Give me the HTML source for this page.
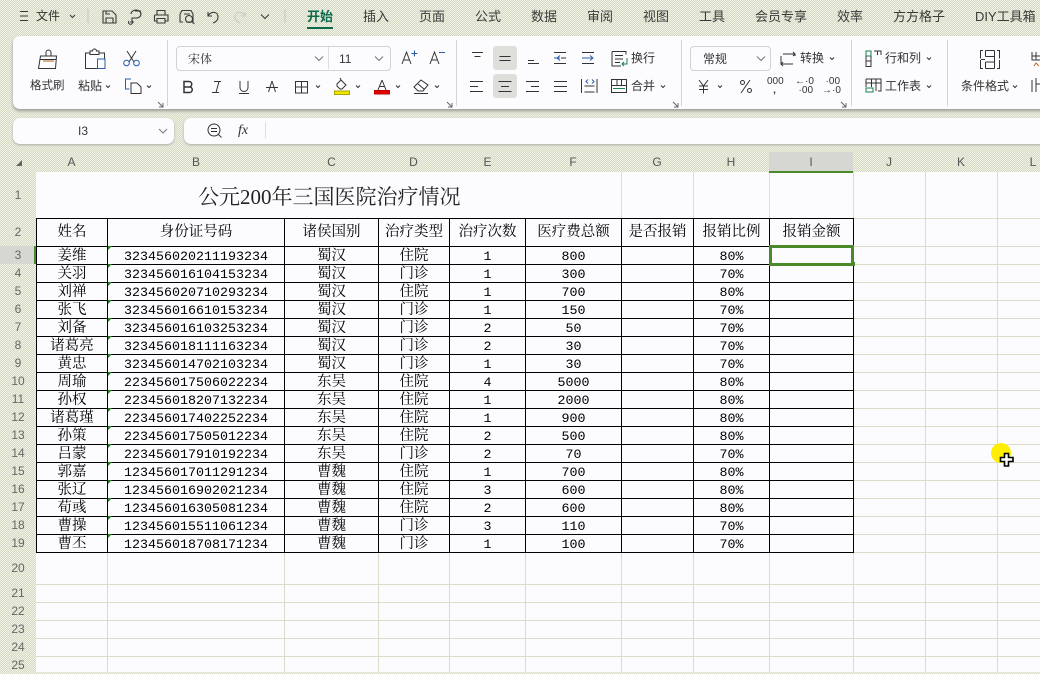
<!DOCTYPE html>
<html lang="zh"><head><meta charset="utf-8"><title>表格</title>
<style>
html,body{margin:0;padding:0}
body{width:1040px;height:672px;overflow:hidden;position:relative;background-color:#e2e5d3;background-image:conic-gradient(#d6dac4 25%,#f1f2e6 0 50%,#d6dac4 0 75%,#f1f2e6 0);background-size:2px 2px;font-family:"Liberation Sans","Noto Sans CJK SC",sans-serif;color:#333}
.a{position:absolute;white-space:nowrap}
.t{position:absolute;white-space:nowrap;font-size:13px;line-height:18px;top:8px;color:#3a3a3a}
.s{position:absolute;white-space:nowrap;font-size:12px;line-height:16px;color:#333}
.card{position:absolute;background:#fcfcff;border-radius:7px;box-shadow:0 1px 2px #aaa}
.hd{position:absolute;top:153px;height:18px;line-height:18px;font-size:12px;text-align:center;color:#555}
.rn{position:absolute;left:0;width:36px;text-align:center;font-size:12px;color:#666;line-height:18px}
#sheet{position:absolute;left:36px;top:172px;width:1004px;height:500px;background:#fcfcff}
table{position:absolute;left:36px;top:218px;border-collapse:collapse;table-layout:fixed;width:817px;font-family:"Liberation Mono","Noto Serif CJK SC",serif;color:#000}
td{border:1px solid #000;padding:4px 0 0;text-align:center;height:13px;line-height:13px;font-size:13.33px;overflow:hidden;white-space:nowrap}
tr.h td{padding-top:2px;height:25px;line-height:25px;font-size:14.5px}
.n{font-size:14.5px}
</style></head><body>
<svg class="a" style="left:0;top:0" width="1040" height="40" fill="none" stroke="#3a3a3a" stroke-width="1.1">
<path d="M20 11.500h8M20 16h8M20 20.500h8"/>
<path d="M70 15l2.500 2.500 2.500-2.500"/>
<path d="M88 9v14M285 9v14" stroke="#c8c8bc"/>
<path d="M103 11h9l4 4v8h-13zM106 23v-5h7v5M106 11v3h4"/>
<path d="M131 14a5 4 0 1 1 4 4h-3v3a2 2 0 1 1-3 0M135 11h6M130 22h4"/>
<path d="M157 15v-4.500h8v4.500M154.500 15h13.500v6h-3M157.500 21h-3v-6M157 18.500h8v4.500h-8z"/>
<path d="M180 14l2-3.500h9l2 3.500v8h-7M180 14v8h3"/><circle cx="189" cy="19" r="3.500"/><path d="M191.500 21.500l3 2.500M184 14h6"/>
<path d="M208 12v4h4M208 16c3-5 10-5 10 1 0 3-2 5-5 6"/>
<path d="M245 12v4h-4M245 16c-3-5-10-5-10 1 0 3 2 5 5 6" stroke="#c9c9c9"/>
<path d="M261 14.500l4 4 4-4"/>
</svg>
<span class="s" style="left:36px;top:8px;font-size:12px">文件</span>
<span class="t" style="left:307px;color:#0b6b4c;font-weight:bold">开始</span>
<div class="a" style="left:307px;top:27px;width:26px;height:2px;background:#0b6b4c"></div>
<span class="t" style="left:363px">插入</span><span class="t" style="left:419px">页面</span><span class="t" style="left:475px">公式</span><span class="t" style="left:531px">数据</span><span class="t" style="left:587px">审阅</span><span class="t" style="left:643px">视图</span><span class="t" style="left:699px">工具</span><span class="t" style="left:755px">会员专享</span><span class="t" style="left:837px">效率</span><span class="t" style="left:893px">方方格子</span><span class="t" style="left:975px">DIY工具箱</span>

<div class="card" style="left:13px;top:36px;width:1040px;height:73px;box-shadow:0 2px 3px #999"></div>
<div class="card" style="left:13px;top:118px;width:161px;height:26px"></div>
<div class="card" style="left:184px;top:118px;width:870px;height:26px"></div>

<div class="a" style="left:176px;top:46px;width:213px;height:23px;border:1px solid #d2d2d2;border-radius:4px;background:#fcfcff"></div>
<div class="a" style="left:328px;top:47px;width:1px;height:22px;background:#ddd"></div>
<div class="a" style="left:690px;top:46px;width:79px;height:23px;border:1px solid #d2d2d2;border-radius:4px"></div>
<div class="a" style="left:493px;top:46px;width:24px;height:24px;border-radius:3px;background:#dededa"></div>
<div class="a" style="left:493px;top:74px;width:24px;height:24px;border-radius:3px;background:#dededa"></div>

<svg class="a" style="left:0;top:36px" width="1040" height="112" viewBox="0 36 1040 112" fill="none" stroke="#333" stroke-width="1">
<path d="M167.500 40v66M456.500 40v66M681.500 40v66M851.500 40v66M947.500 40v66" stroke="#d4d4d4"/>
<!-- launchers -->
<path d="M158 102l5 5M163 103v4h-4M447 102l5 5M452 103v4h-4M673 102l5 5M678 103v4h-4M841 102l5 5M846 103v4h-4" stroke="#666"/>
<!-- format brush -->
<path d="M46 56v-3.500a2.500 2.500 0 0 1 5 0v3.500M40.500 56h16l-1 12.500h-17zM40 59.500h16.500"/><path d="M43 61h11" stroke="#b5651d"/>
<!-- paste -->
<path d="M90 53h-4.500v15.500h13M104.500 59v-6h-5M90 53v-2h2.500a2 2 0 0 1 4 0h2.500v3.500h-9z"/><path d="M97.500 59h7.500v9.500h-7.500z" stroke="#2a5caa"/>
<!-- scissors -->
<path d="M127 51l7 11M136 51l-7 11"/><circle cx="126.500" cy="63" r="2.800" stroke="#2a5caa"/><circle cx="136.500" cy="63" r="2.800" stroke="#2a5caa"/>
<!-- copy -->
<path d="M131 79h-5.500v10h4" stroke="#2a5caa"/><path d="M131 83h6l4 4v6.500h-10z"/>
<!-- chevrons -->
<path d="M106 85.500l2 2 2-2M147 85.500l2 2 2-2M316 85.500l2 2 2-2M356 85.500l2 2 2-2M396 85.500l2 2 2-2M435 85.500l2 2 2-2M661 85.500l2 2 2-2M718 85.500l2 2 2-2M830 57.500l2 2 2-2M927 57.500l2 2 2-2M927 85.500l2 2 2-2M1013 85.500l2 2 2-2"/>
<path d="M315 56.500l4 4 4-4M375 56.500l4 4 4-4M757 56.500l4 4 4-4M159 129l4 4 4-4" stroke="#777"/>
<!-- B I U S -->
<path d="M184 81.500h5a2.500 2.500 0 0 1 0 5.500h-5zM184 87h5.500a2.600 2.600 0 0 1 0 5.500h-5.500z" stroke-width="1.500"/>
<path d="M214 81.500h7M219 81.500l-3 11M212 92.500h7"/>
<path d="M240 81v6.500a4 4 0 0 0 8 0v-6.500M239 93.500h10"/>
<path d="M272 81l-3.500 11M272 81l3.500 11M266 87.500h12"/>
<path d="M295.500 81.500h12v11.500h-12zM301.500 81.500v11.500M295.500 87h12"/>
<!-- fill -->
<path d="M337 84l4-4 5 5-4 4h-2l-3-3zM341 80l-1-2"/><rect x="334.500" y="91" width="15" height="3.500" fill="#f2e600" stroke="#a9a400"/>
<!-- font color -->
<path d="M382 80l-4 10M382 80l4 10M379.500 86.500h5.500"/><rect x="374.500" y="90.500" width="15" height="3.500" fill="#e00000" stroke="#c00000"/>
<!-- eraser -->
<path d="M414 87l7-7 7 5-5 6h-5zM418 84l6 5M414 93.500h14"/>
<!-- A+ A- -->
<path d="M402 64l4.500-12 4.500 12M404 60h5"/><path d="M411.500 53.500h6M414.500 50.500v6" stroke="#2a5caa"/>
<path d="M430 64l4.500-12 4.500 12M432 60h5"/><path d="M439 52.500h6" stroke="#2a5caa"/>
<!-- align top row -->
<path d="M472 52.500h11M474.500 56.500h6"/>
<path d="M499.500 56.500h11M499.500 60.500h11"/>
<path d="M528 60.500h6M528 63.500h11"/>
<path d="M554 52.500h12M561 58h5M554 63.500h12"/><path d="M560 55.500l-3 2.500 3 2.500M554 58h6" stroke="#2a5caa"/>
<path d="M582 52.500h12M589 63.500h5M582 63.500h7"/><path d="M590 55.500l3 2.500-3 2.500M582 58h10" stroke="#2a5caa"/>
<path d="M612 51.500h14v3M612 51.500v14.500h9M615 55.500h8M615 59h8M615 62.500h5"/><path d="M627 58v6h-5M624 62l-2 2 2 2" stroke="#1a7f4e"/>
<!-- align row2 -->
<path d="M470 81.500h13M470 86.500h8M470 91.500h13"/>
<path d="M498.500 81.500h13M501 86.500h8M498.500 91.500h13"/>
<path d="M526 81.500h13M531 86.500h8M526 91.500h13"/>
<path d="M554 81.500h13M554 86.500h13M554 91.500h13"/>
<path d="M581.500 79v14M597 79v14M584.500 86h10M584.500 92h10"/><path d="M588 79.500l-2 2 2 2M592 79.500l2 2-2 2" stroke="#2a5caa"/>
<path d="M611.500 79.500h15v13h-15zM617 79.500v6M621.500 79.500v6M611.500 85.500h15"/><path d="M613 88.500h12" stroke="#1a7f4e"/>
<!-- convert -->
<path d="M783 54h12v2M793 52l2 2-2 2M793 64h-12v-8M783 62l-2 2 2 2"/>
<!-- yen percent -->
<path d="M699 80l4.500 6 4.500-6M703.500 86v7.500M699 86h9M699 89.500h9"/>
<path d="M741 93l9-13"/><circle cx="742.500" cy="82.500" r="2"/><circle cx="749.500" cy="90.500" r="2"/>
<!-- row & col -->
<path d="M866 51h5v5h-5z" stroke="#1a7f4e"/><path d="M866 56v10.500h5v-10.500M866 61h5M874 51h7v4M877.500 51v4"/>
<path d="M866 79h15v12h-3M866 79v8M871.500 79v8M876 79v12M866 83h15"/><path d="M866 88h7v4h-7z" stroke="#1a7f4e"/>
<!-- cond format -->
<path d="M983 50.500h-2.500v8M980.500 60v8.500h2.500M997 50.500h2.500v8M999.500 60v8.500h-2.500M985.500 50.500h9M985.500 68.500h9M985.500 50.500v6M985.500 62v6.500M994.500 50.500v6M994.500 62v6.500M985.500 56.500h9v5.500h-9M981 59.500h4"/>
<path d="M1032 52v8h8M1036 52v8M1032 56h8"/><path d="M1034 66l2-3 3 3" stroke="#c2651d"/><path d="M1032 80v12M1036 78v14M1036 84h6"/>
<!-- magnifier -->
<circle cx="214" cy="130" r="6"/><path d="M218.500 134.500l3 3M211 128.500h6M211 131.500h6"/>
<path d="M265.500 122v16" stroke="#ddd"/>
</svg>

<span class="s" style="left:30px;top:78px;font-size:11.500px">格式刷</span>
<span class="s" style="left:78px;top:78px">粘贴</span>
<span class="s" style="left:188px;top:51px;font-family:'Liberation Serif','Noto Serif CJK SC',serif">宋体</span>
<span class="s" style="left:339px;top:51px">11</span>
<span class="s" style="left:631px;top:50px">换行</span>
<span class="s" style="left:631px;top:78px">合并</span>
<span class="s" style="left:703px;top:51px">常规</span>
<span class="s" style="left:800px;top:50px">转换</span>
<span class="s" style="left:885px;top:50px">行和列</span>
<span class="s" style="left:885px;top:78px">工作表</span>
<span class="s" style="left:961px;top:78px">条件格式</span>
<span class="s" style="left:767px;top:77px;font-size:10px;line-height:9px;text-align:center;width:15px">000<br><b>,</b></span>
<span class="s" style="left:795px;top:77px;font-size:10px;line-height:9px;width:18px;text-align:right">←·0<br>·00</span>
<span class="s" style="left:822px;top:77px;font-size:10px;line-height:9px;width:18px;text-align:right">·00<br>→·0</span>
<span class="s" style="left:78px;top:123px;font-size:12px">I3</span>
<span class="s" style="left:238px;top:122px;font:italic 14px/18px 'Liberation Serif',serif">fx</span>

<div class="hd" style="left:36px;width:71px">A</div><div class="hd" style="left:108px;width:176px">B</div><div class="hd" style="left:285px;width:93px">C</div><div class="hd" style="left:378px;width:71px">D</div><div class="hd" style="left:450px;width:75px">E</div><div class="hd" style="left:525px;width:96px">F</div><div class="hd" style="left:621px;width:72px">G</div><div class="hd" style="left:693px;width:76px">H</div>
<div class="a" style="left:769px;top:152px;width:84px;height:19px;background:#d6d6d2"></div>
<div class="hd" style="left:769px;width:84px">I</div><div class="hd" style="left:853px;width:72px">J</div><div class="hd" style="left:925px;width:72px">K</div><div class="hd" style="left:997px;width:72px">L</div>
<svg class="a" style="left:15px;top:158px" width="9" height="9"><path d="M1 8L7 2V8Z" fill="#666"/></svg>

<div id="sheet"></div>
<svg class="a" style="left:0;top:172px" width="1040" height="500" viewBox="0 172 1040 500" stroke="#dcdcc8" stroke-width="1" fill="none">
<path d="M107.500 172V672M284.500 172V672M378.500 172V672M449.500 172V672M525.500 172V672M621.500 172V672M693.500 172V672M769.500 172V672M853.500 172V672M925.500 172V672M997.500 172V672"/>
<path d="M36 218.500H1040M36 246.500H1040M36 264.500H1040M36 282.500H1040M36 300.500H1040M36 318.500H1040M36 336.500H1040M36 354.500H1040M36 372.500H1040M36 390.500H1040M36 408.500H1040M36 426.500H1040M36 444.500H1040M36 462.500H1040M36 480.500H1040M36 498.500H1040M36 516.500H1040M36 534.500H1040M36 552.500H1040M36 584.500H1040M36 602.500H1040M36 620.500H1040M36 638.500H1040M36 656.500H1040"/>
</svg>
<div class="a" style="left:36px;top:172px;width:585px;height:46px;background:#fcfcff"></div>
<div class="a" style="left:621px;top:172px;width:1px;height:46px;background:#dcdcee"></div>
<div class="a" style="left:693px;top:172px;width:1px;height:46px;background:#dcdcee"></div>
<div class="a" style="left:769px;top:172px;width:1px;height:46px;background:#dcdcee"></div>
<div class="a" style="left:769px;top:171px;width:84px;height:2px;background:#4a8a2a"></div>
<div class="a" style="left:198px;top:183px;font:21px/28px 'Liberation Serif','Noto Serif CJK SC',serif;color:#222">公元200年三国医院治疗情况</div>

<div class="a" style="left:0;top:246px;width:34px;height:18px;background:#d6d6d2"></div>
<div class="a" style="left:34px;top:246px;width:2px;height:18px;background:#4a8a2a"></div>
<div class="rn" style="top:186px">1</div><div class="rn" style="top:223px">2</div><div class="rn" style="top:246px">3</div><div class="rn" style="top:264px">4</div><div class="rn" style="top:282px">5</div><div class="rn" style="top:300px">6</div><div class="rn" style="top:318px">7</div><div class="rn" style="top:336px">8</div><div class="rn" style="top:354px">9</div><div class="rn" style="top:372px">10</div><div class="rn" style="top:390px">11</div><div class="rn" style="top:408px">12</div><div class="rn" style="top:426px">13</div><div class="rn" style="top:444px">14</div><div class="rn" style="top:462px">15</div><div class="rn" style="top:480px">16</div><div class="rn" style="top:498px">17</div><div class="rn" style="top:516px">18</div><div class="rn" style="top:534px">19</div><div class="rn" style="top:559px">20</div><div class="rn" style="top:584px">21</div><div class="rn" style="top:602px">22</div><div class="rn" style="top:620px">23</div><div class="rn" style="top:638px">24</div><div class="rn" style="top:656px">25</div>

<table>
<colgroup><col style="width:71px"><col style="width:177px"><col style="width:94px"><col style="width:71px"><col style="width:76px"><col style="width:96px"><col style="width:72px"><col style="width:76px"><col style="width:84px"></colgroup>
<tr class="h"><td>姓名</td><td>身份证号码</td><td>诸侯国别</td><td>治疗类型</td><td>治疗次数</td><td>医疗费总额</td><td>是否报销</td><td>报销比例</td><td>报销金额</td></tr>
<tr><td class="n">姜维</td><td>323456020211193234</td><td class="n">蜀汉</td><td class="n">住院</td><td>1</td><td>800</td><td></td><td>80%</td><td></td></tr>
<tr><td class="n">关羽</td><td>323456016104153234</td><td class="n">蜀汉</td><td class="n">门诊</td><td>1</td><td>300</td><td></td><td>70%</td><td></td></tr>
<tr><td class="n">刘禅</td><td>323456020710293234</td><td class="n">蜀汉</td><td class="n">住院</td><td>1</td><td>700</td><td></td><td>80%</td><td></td></tr>
<tr><td class="n">张飞</td><td>323456016610153234</td><td class="n">蜀汉</td><td class="n">门诊</td><td>1</td><td>150</td><td></td><td>70%</td><td></td></tr>
<tr><td class="n">刘备</td><td>323456016103253234</td><td class="n">蜀汉</td><td class="n">门诊</td><td>2</td><td>50</td><td></td><td>70%</td><td></td></tr>
<tr><td class="n">诸葛亮</td><td>323456018111163234</td><td class="n">蜀汉</td><td class="n">门诊</td><td>2</td><td>30</td><td></td><td>70%</td><td></td></tr>
<tr><td class="n">黄忠</td><td>323456014702103234</td><td class="n">蜀汉</td><td class="n">门诊</td><td>1</td><td>30</td><td></td><td>70%</td><td></td></tr>
<tr><td class="n">周瑜</td><td>223456017506022234</td><td class="n">东吴</td><td class="n">住院</td><td>4</td><td>5000</td><td></td><td>80%</td><td></td></tr>
<tr><td class="n">孙权</td><td>223456018207132234</td><td class="n">东吴</td><td class="n">住院</td><td>1</td><td>2000</td><td></td><td>80%</td><td></td></tr>
<tr><td class="n">诸葛瑾</td><td>223456017402252234</td><td class="n">东吴</td><td class="n">住院</td><td>1</td><td>900</td><td></td><td>80%</td><td></td></tr>
<tr><td class="n">孙策</td><td>223456017505012234</td><td class="n">东吴</td><td class="n">住院</td><td>2</td><td>500</td><td></td><td>80%</td><td></td></tr>
<tr><td class="n">吕蒙</td><td>223456017910192234</td><td class="n">东吴</td><td class="n">门诊</td><td>2</td><td>70</td><td></td><td>70%</td><td></td></tr>
<tr><td class="n">郭嘉</td><td>123456017011291234</td><td class="n">曹魏</td><td class="n">住院</td><td>1</td><td>700</td><td></td><td>80%</td><td></td></tr>
<tr><td class="n">张辽</td><td>123456016902021234</td><td class="n">曹魏</td><td class="n">住院</td><td>3</td><td>600</td><td></td><td>80%</td><td></td></tr>
<tr><td class="n">荀彧</td><td>123456016305081234</td><td class="n">曹魏</td><td class="n">住院</td><td>2</td><td>600</td><td></td><td>80%</td><td></td></tr>
<tr><td class="n">曹操</td><td>123456015511061234</td><td class="n">曹魏</td><td class="n">门诊</td><td>3</td><td>110</td><td></td><td>70%</td><td></td></tr>
<tr><td class="n">曹丕</td><td>123456018708171234</td><td class="n">曹魏</td><td class="n">门诊</td><td>1</td><td>100</td><td></td><td>70%</td><td></td></tr>
</table>

<svg class="a" style="left:108px;top:246px" width="5" height="306" fill="#2a7d2a"><path d="M0 0h4l-4 4zM0 18h4l-4 4zM0 36h4l-4 4zM0 54h4l-4 4zM0 72h4l-4 4zM0 90h4l-4 4zM0 108h4l-4 4zM0 126h4l-4 4zM0 144h4l-4 4zM0 162h4l-4 4zM0 180h4l-4 4zM0 198h4l-4 4zM0 216h4l-4 4zM0 234h4l-4 4zM0 252h4l-4 4zM0 270h4l-4 4zM0 288h4l-4 4z"/></svg>
<div class="a" style="left:769px;top:245px;width:79px;height:15px;border:3px solid #4a8a2a"></div>
<div class="a" style="left:851px;top:262px;width:4px;height:4px;background:#4a8a2a"></div>
<div class="a" style="left:991px;top:443px;width:20px;height:20px;border-radius:50%;background:#ffee00"></div>
<svg class="a" style="left:999px;top:452px" width="16" height="16"><path d="M5.500 1.500h4v4h4.500v4h-4.500v4.500h-4v-4.500h-4v-4h4z" fill="#fff" stroke="#000" stroke-width="1.600"/></svg>
</body></html>
